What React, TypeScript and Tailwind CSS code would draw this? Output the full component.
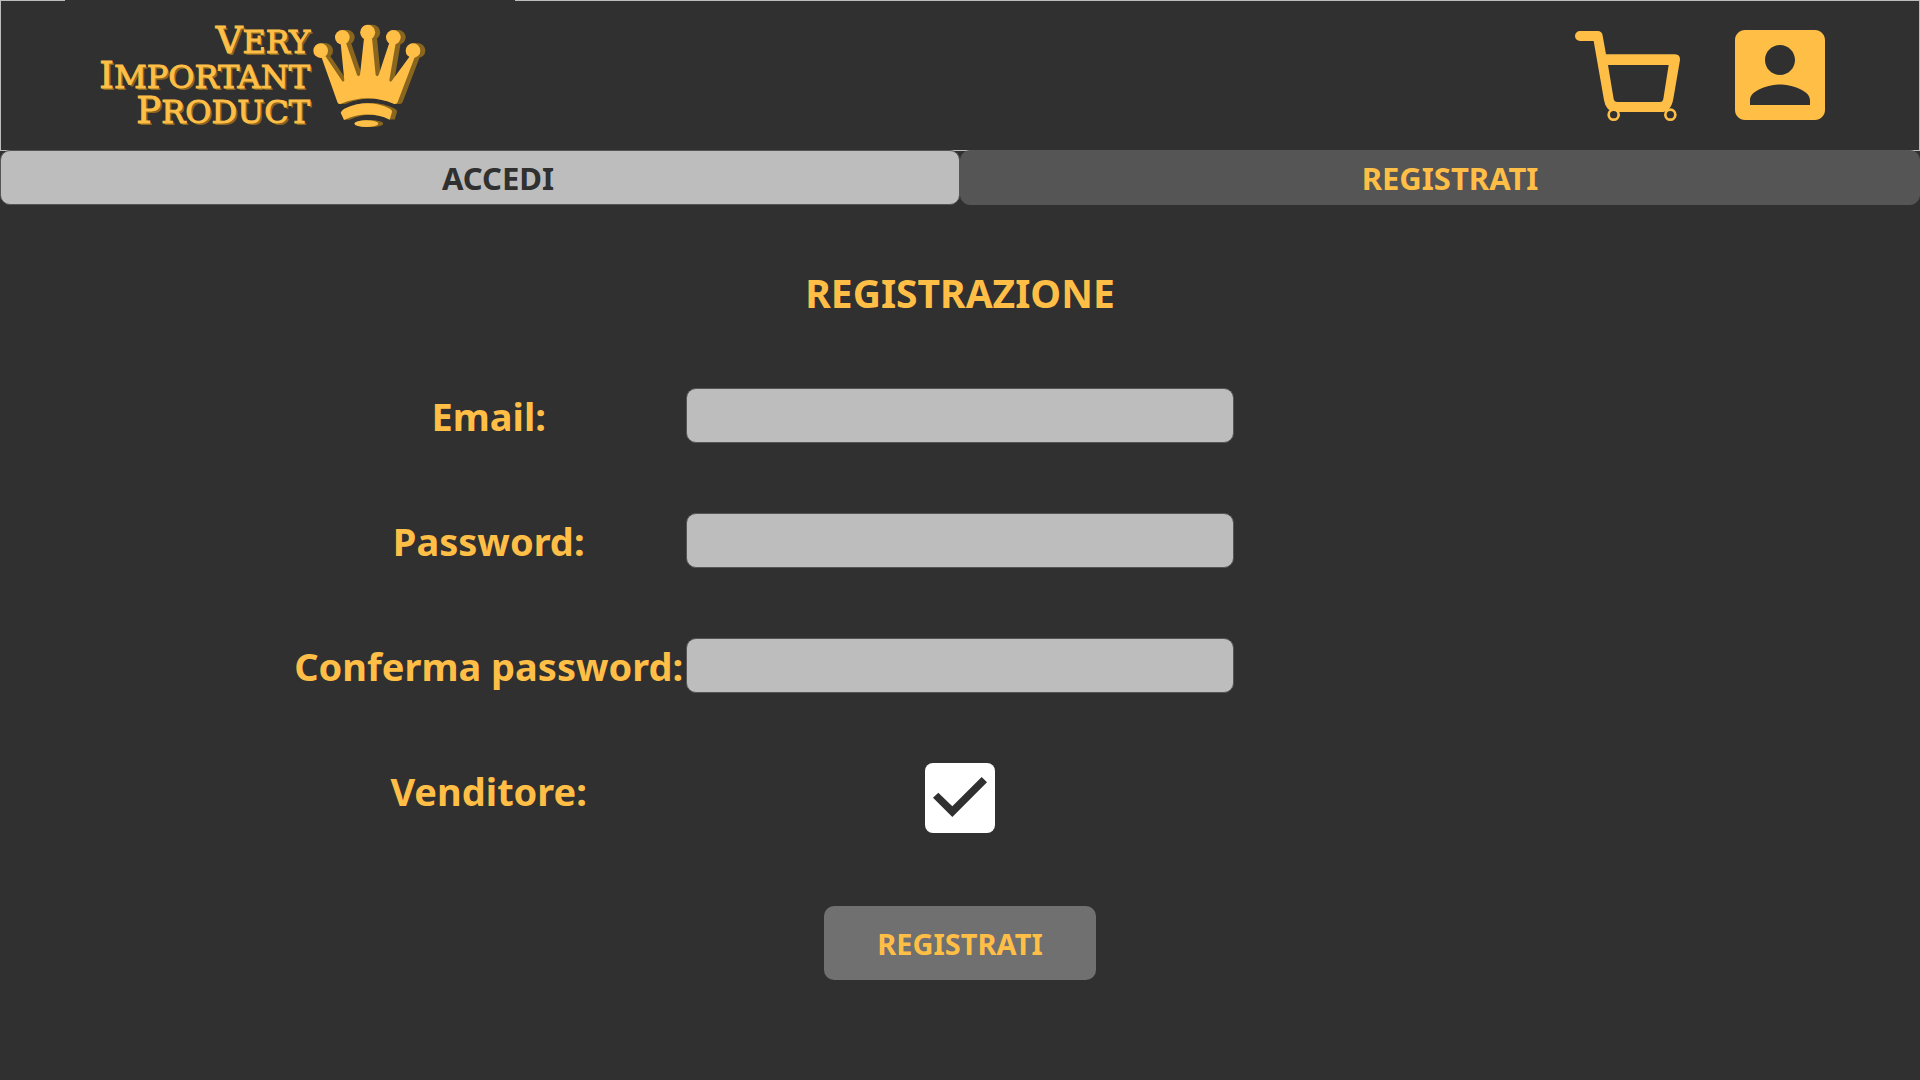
import React from "react";

const crownOffsets = [15, 11, 7, 3];

function CrownShape() {
  return (
    <>
      <circle cx="62" cy="122" r="22" />
      <circle cx="127" cy="82" r="22" />
      <circle cx="203" cy="67" r="22.5" />
      <circle cx="280" cy="82" r="22" />
      <circle cx="339" cy="122" r="22" />
      <path d="M64 140 L112 276 Q114 284 123 281 Q203 248 281 281 Q289 284 293 276 L344 142 L330 138 L275 213 Q270 218 268 211 L287 100 L268 98 L236 195 Q231 202 227 195 L216 85 H192 L180 195 Q176 202 171 195 L138 98 L122 100 L133 211 Q131 218 126 212 L76 138 Z" />
      <path d="M122 308 Q125 300 133 296 Q203 264 270 296 Q277 300 276 306 L269 329 Q203 298 132 330 Z" />
      <ellipse cx="199" cy="341" rx="36" ry="10" />
    </>
  );
}

function Crown() {
  return (
    <svg viewBox="36 42 342 312" className="h-[104px] w-[114px] shrink-0" aria-hidden="true">
      <g fill="#8a661f">
        {crownOffsets.map((x) => (
          <g key={x} transform={`translate(${x} 0)`}>
            <CrownShape />
          </g>
        ))}
      </g>
      <g fill="#ffbf47">
        <CrownShape />
      </g>
    </svg>
  );
}

function LogoWord({ first, rest }: { first: string; rest: string }) {
  return (
    <span className="block text-[32px]">
      <span className="text-[37px]">{first}</span>
      {rest}
    </span>
  );
}

function Logo() {
  return (
    <a href="#" className="-mt-px ml-16 flex h-[150px] w-[450px] items-center bg-[#303030] pt-0.5">
      <span className="block w-[247px] shrink-0 pr-0.5 text-right font-['DejaVu_Serif',serif] leading-[34px] text-[#ffbf47] [-webkit-text-stroke:1px_#ffbf47] [text-shadow:1px_1px_#8a661f,2px_2px_#8a661f]">
        <LogoWord first="V" rest="ERY" />
        <LogoWord first="I" rest="MPORTANT" />
        <LogoWord first="P" rest="RODUCT" />
      </span>
      <Crown />
    </a>
  );
}

function CartIcon() {
  return (
    <svg viewBox="30 45 360 360" className="size-[120px]" aria-hidden="true">
      <path
        fill="#ffbf47"
        fillRule="evenodd"
        d="M60 93 H113 Q126 93 128 107 L138 163 H345 Q361 164 360 180 L340 296 Q333 336 303 336 H167 Q137 334 132 300 L101 123 H60 A15 15 0 0 1 60 93 Z M144 195 L161 297 Q163 306 172 306 H300 Q308 306 310 297 L326 195 Z"
      />
      <g fill="#303030" stroke="#ffbf47" strokeWidth="8">
        <circle cx="161" cy="344" r="15" />
        <circle cx="331" cy="344" r="15" />
      </g>
    </svg>
  );
}

function AccountIcon() {
  return (
    <svg viewBox="0 0 24 24" fill="#ffbf47" className="size-[120px]" aria-hidden="true">
      <path d="M3 5v14c0 1.1.89 2 2 2h14c1.1 0 2-.9 2-2V5c0-1.1-.9-2-2-2H5c-1.11 0-2 .9-2 2zm12 4c0 1.66-1.34 3-3 3s-3-1.34-3-3 1.34-3 3-3 3 1.34 3 3zm-9 8c0-2 4-3.1 6-3.1s6 1.1 6 3.1v1H6v-1z" />
    </svg>
  );
}

function Row({ id, label, children }: { id: string; label: string; children: React.ReactNode }) {
  return (
    <div className="grid grid-cols-[5fr_4fr_5fr]">
      <label
        htmlFor={id}
        className="ml-auto w-[394px] pt-0.5 text-center text-[38px] leading-[53px] font-bold whitespace-nowrap"
      >
        {label}
      </label>
      {children}
    </div>
  );
}

const fields = [
  { id: "email", label: "Email:", type: "email" },
  { id: "password", label: "Password:", type: "password" },
  { id: "confirm", label: "Conferma password:", type: "password" },
];

export default function App() {
  return (
    <div className="min-h-screen bg-[#303030] font-['Noto_Sans',sans-serif] text-[#ffbf47]">
      <header className="flex items-start justify-between border border-[#bdbdbd] pr-[79px]">
        <Logo />
        <nav className="flex gap-[30px] pt-3.5">
          <a href="#" aria-label="Carrello">
            <CartIcon />
          </a>
          <a href="#" aria-label="Account">
            <AccountIcon />
          </a>
        </nav>
      </header>

      <div className="-mt-px grid grid-cols-2 text-[31px] leading-[51px] font-bold">
        <button
          type="button"
          className="rounded-[10px] border border-[#555555] bg-[#bdbdbd] pt-0.5 pl-9 text-[#303030]"
        >
          ACCEDI
        </button>
        <button
          type="button"
          className="rounded-[10px] border border-[#555555] bg-[#555555] pt-0.5 pl-5"
        >
          REGISTRATI
        </button>
      </div>

      <form className="pt-[60px]" onSubmit={(e) => e.preventDefault()}>
        <h1 className="text-center text-[39px] leading-[56px] font-bold">REGISTRAZIONE</h1>
        <div className="mt-[67px] flex flex-col gap-[70px]">
          {fields.map((f) => (
            <Row key={f.id} id={f.id} label={f.label}>
              <input
                id={f.id}
                type={f.type}
                className="h-[55px] w-full rounded-[10px] border border-[#555555] bg-[#bdbdbd] px-3 text-[31px] text-[#303030]"
              />
            </Row>
          ))}
          <Row id="seller" label="Venditore:">
            <span className="relative mx-auto size-[70px]">
              <input
                id="seller"
                type="checkbox"
                defaultChecked
                className="peer block size-full appearance-none rounded-lg bg-white"
              />
              <svg
                viewBox="0 0 210 210"
                className="pointer-events-none absolute inset-0 hidden size-full peer-checked:block"
                aria-hidden="true"
              >
                <path fill="#303030" d="M24 104 L40 89 L82 130 L170 42 L186 58 L82 162 Z" />
              </svg>
            </span>
          </Row>
        </div>
        <button
          type="submit"
          className="mx-auto mt-[73px] block w-[272px] rounded-[10px] bg-[#707070] pt-0.5 text-[29px] leading-[72px] font-bold"
        >
          REGISTRATI
        </button>
      </form>
    </div>
  );
}
